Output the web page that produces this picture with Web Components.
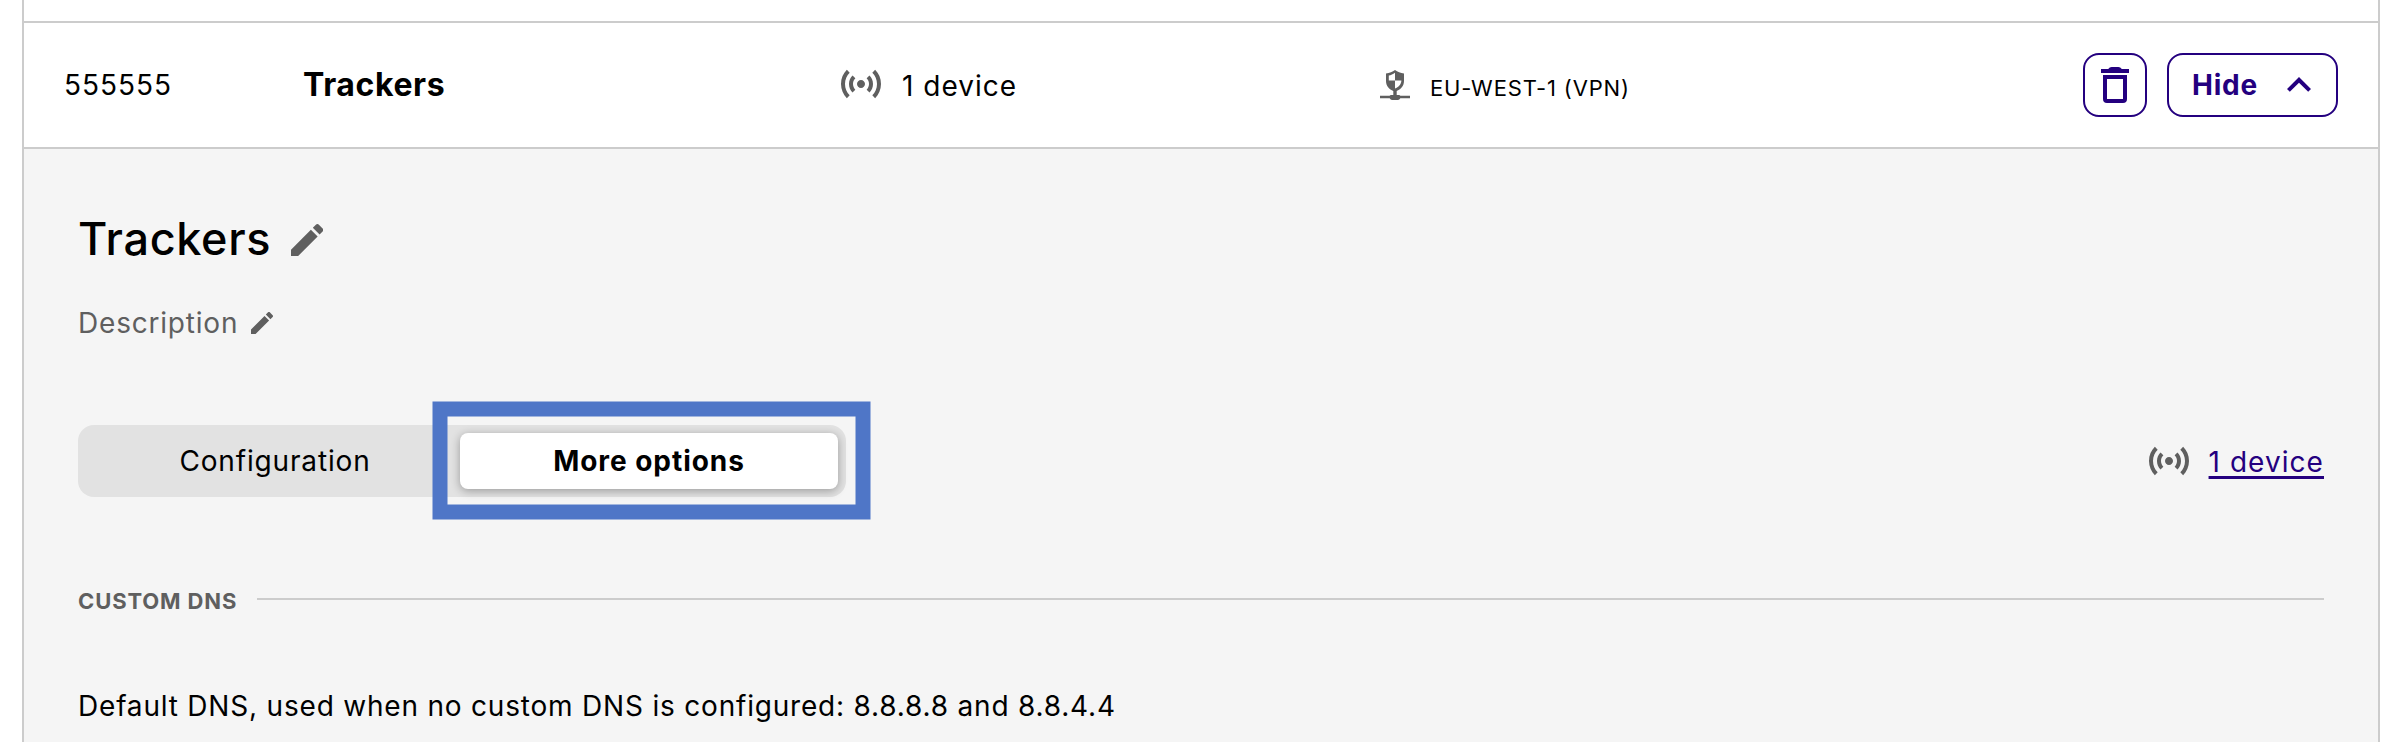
<!DOCTYPE html>
<html lang="en">
<head>
<meta charset="utf-8">
<title>Device groups</title>
<style>
  body { margin: 0; height: 742px; overflow: hidden; background: #fff; color: #000; font: 400 28px/34px Inter, sans-serif; letter-spacing: .8px; }
</style>
</head>
<body>
<group-card>
  <group-row slot="row"></group-row>
  <group-detail slot="detail"></group-detail>
</group-card>
<script>
const define = (name, html) => customElements.define(name, class extends HTMLElement {
  constructor() {
    super();
    const t = document.createElement('template');
    t.innerHTML = html;
    this.attachShadow({ mode: 'open' }).append(t.content.cloneNode(true));
  }
});

const ICONS = {
  signal: ['0 0 24 24', '<path d="M7.76 16.24C6.67 15.16 6 13.66 6 12s.67-3.16 1.76-4.24l1.42 1.42C8.45 9.9 8 10.9 8 12c0 1.1.45 2.1 1.17 2.83l-1.41 1.41zm8.48 0C17.33 15.16 18 13.66 18 12s-.67-3.16-1.76-4.24l-1.42 1.42C15.55 9.9 16 10.9 16 12c0 1.1-.45 2.1-1.17 2.83l1.41 1.41zM12 10c-1.1 0-2 .9-2 2s.9 2 2 2 2-.9 2-2-.9-2-2-2zm8 2c0 2.21-.9 4.21-2.35 5.65l1.42 1.42C20.88 17.26 22 14.76 22 12s-1.12-5.26-2.93-7.07l-1.42 1.42C19.1 7.79 20 9.79 20 12zM6.35 6.35 4.93 4.93C3.12 6.74 2 9.24 2 12s1.12 5.26 2.93 7.07l1.42-1.42C4.9 16.21 4 14.21 4 12s.9-4.21 2.35-5.65z"/>'],
  pencil: ['3 3 18 18', '<path d="M3 17.25V21h3.75L17.81 9.94l-3.75-3.75L3 17.25zM20.71 7.04c.39-.39.39-1.02 0-1.41l-2.34-2.34c-.39-.39-1.02-.39-1.41 0l-1.83 1.83 3.75 3.75 1.83-1.83z"/>'],
  trash: ['0 0 24 24', '<path fill-rule="evenodd" d="M5 4h3.6q.7-1 1.7-1h3.4q1 0 1.7 1H19v2H5zM6 7h12v12a2 2 0 0 1-2 2H8a2 2 0 0 1-2-2zM8 9v10h8V9z"/>'],
  up: ['0 0 24 24', '<path d="M12 8l-6 6 1.41 1.41L12 10.83l4.59 4.58L18 14z"/>'],
  vpn: ['0 0 30 30', '<path fill-rule="evenodd" d="M15 0C17.5 1.8 20.5 3 24 3.4V11c0 5-3.3 8.6-7.3 9.9V25h2q1.6 0 1.6.8H30v2.4H20.3q-.8 1.8-2.3 1.8h-6q-1.5 0-2.3-1.8H0v-2.4h9.7q0-.8 1.6-.8h2V20.9C9.3 19.6 6 16 6 11V3.4C9.5 3 12.5 1.8 15 0zM15 2.8C13 4.3 11 5.2 8.8 5.6V10.5H15zM15 10.5V18.6C18.5 17.3 21.2 14.6 21.4 10.5z"/>']
};
customElements.define('ui-icon', class extends HTMLElement {
  connectedCallback() {
    const [box, body] = ICONS[this.getAttribute('name')];
    this.attachShadow({ mode: 'open' }).innerHTML =
      `<style>:host{display:block;flex:none;width:48px;height:48px;color:#5f5f5f}svg{display:block;width:100%;height:100%;fill:currentColor}</style><svg viewBox="${box}">${body}</svg>`;
  }
});

define('ui-button', `<style>
  :host { display: flex; align-items: center; justify-content: space-between; box-sizing: border-box; height: 64px;
    border: 2px solid #24007f; border-radius: 16px; color: #24007f; font-weight: 700; background: #fff; }
  ::slotted(ui-icon) { color: #24007f; }
</style><slot></slot>`);

define('group-row', `<style>
  :host { display: grid; grid-template-columns: 239px 534px 543px 1fr auto; align-items: center; height: 124px; padding: 0 40px; background: #fff; }
  .id { letter-spacing: 1px; }
  .name { font-weight: 700; font-size: 32px; line-height: 40px; letter-spacing: .6px; }
  .devices, .region, .actions { display: flex; align-items: center; }
  .devices { gap: 17px; letter-spacing: 1px; margin-top: -2px; }
  .devices span { padding-top: 4px; }
  .region { gap: 20px; }
  .region span { font-size: 22px; letter-spacing: .84px; padding-top: 5px; }
  .region ui-icon { width: 30px; height: 30px; }
  .actions { grid-column: 5; gap: 20px; }
  .delete { width: 64px; padding: 0 6px; }
  .toggle { width: 171px; padding: 0 13px 0 23px; }
</style>
<div class="id">555555</div>
<div class="name">Trackers</div>
<div class="devices"><ui-icon name="signal"></ui-icon><span>1 device</span></div>
<div class="region"><ui-icon name="vpn"></ui-icon><span>EU-WEST-1 (VPN)</span></div>
<div class="actions">
  <ui-button class="delete"><ui-icon name="trash"></ui-icon></ui-button>
  <ui-button class="toggle">Hide<ui-icon name="up"></ui-icon></ui-button>
</div>`);

define('tab-switch', `<style>
  :host { position: relative; display: grid; grid-template-columns: 374px 378px; box-sizing: border-box; width: 768px; height: 72px;
    padding: 8px; border-radius: 16px; background: #e2e2e2; }
  div { display: flex; align-items: center; justify-content: center; }
  .off { padding-left: 4px; letter-spacing: .84px; }
  .on { border-radius: 8px; background: #fff; font-weight: 700; letter-spacing: .95px; box-shadow: 0 2px 10px rgba(0,0,0,.32); }
  svg { position: absolute; left: 354px; top: -24px; }
</style>
<div class="off">Configuration</div>
<div class="on">More options</div>
<svg width="439" height="119"><rect x="8" y="8" width="423" height="103" fill="none" stroke="#4f76c7" stroke-width="15"/></svg>`);

define('section-heading', `<style>
  :host { display: flex; align-items: center; height: 30px; }
  .label { width: 179px; padding-top: 3px; font-size: 22px; line-height: 22px; font-weight: 700; letter-spacing: .88px; color: #5f5f5f; }
  .rule { flex: 1; height: 2px; background: #ccc; }
</style><div class="label"><slot></slot></div><div class="rule"></div>`);

define('group-detail', `<style>
  :host { display: block; padding: 63px 54px 0; background: #f5f5f5; }
  .title, .desc, .bar, .link { display: flex; align-items: center; }
  .title { height: 54px; font-size: 45px; font-weight: 500; letter-spacing: .68px; }
  .title span { width: 213px; }
  .title ui-icon { width: 32.4px; height: 32.4px; margin-top: 2px; }
  .desc { height: 34px; margin-top: 40px; color: #5f5f5f; }
  .desc span { width: 173px; }
  .desc ui-icon { width: 22px; height: 22px; }
  .bar { justify-content: space-between; margin-top: 85px; }
  .link { gap: 16px; letter-spacing: 1.05px; }
  .link span { padding-top: 2px; color: #24007f; text-decoration: underline 3px; text-underline-offset: 4px; text-decoration-skip-ink: none; }
  section-heading { margin-top: 87px; }
  .note { margin-top: 75px; letter-spacing: .8px; }
</style>
<div class="title"><span>Trackers</span><ui-icon name="pencil"></ui-icon></div>
<div class="desc"><span>Description</span><ui-icon name="pencil"></ui-icon></div>
<div class="bar">
  <tab-switch></tab-switch>
  <div class="link"><ui-icon name="signal"></ui-icon><span>1 device</span></div>
</div>
<section-heading>CUSTOM DNS</section-heading>
<div class="note">Default DNS, used when no custom DNS is configured: 8.8.8.8 and 8.8.4.4</div>`);

define('group-card', `<style>
  :host { display: grid; grid-template-rows: 21px 128px 1fr; box-sizing: border-box; width: 2358px; height: 742px; margin-left: 22px;
    border: solid #ccc; border-width: 0 2px; }
  .row { border: solid #ccc; border-width: 2px 0; }
  .detail { display: grid; }
</style>
<div></div>
<div class="row"><slot name="row"></slot></div>
<div class="detail"><slot name="detail"></slot></div>`);
</script>
</body>
</html>
